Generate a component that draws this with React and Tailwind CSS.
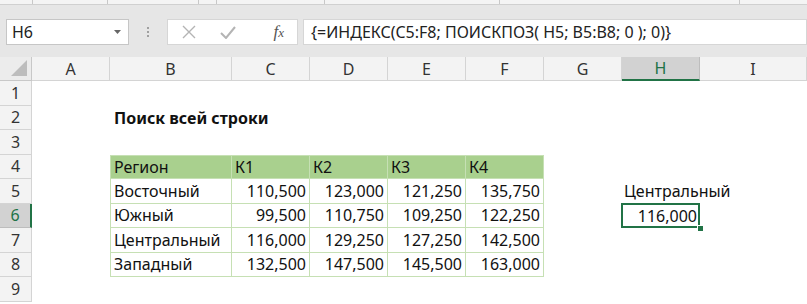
const cols = ["A", "B", "C", "D", "E", "F", "G", "H", "I"];

const data = [
  ["Восточный", "110,500", "123,000", "121,250", "135,750"],
  ["Южный", "99,500", "110,750", "109,250", "122,250"],
  ["Центральный", "116,000", "129,250", "127,250", "142,500"],
  ["Западный", "132,500", "147,500", "145,500", "163,000"],
];

function Cell({ row, col }) {
  // col: 0 = A ... 8 = I
  const inTable = row >= 4 && row <= 8 && col >= 1 && col <= 5;
  let cls = "relative flex items-center text-[16px] text-[#111] whitespace-nowrap";
  let content = null;

  if (inTable) {
    cls += " border-r border-b border-[#c6e0b4]";
    if (col === 1) cls += " border-l";
    if (row === 4) cls += " border-t bg-[#a9d08e] px-[3px]";
    if (row === 4) {
      content = ["Регион", "К1", "К2", "К3", "К4"][col - 1];
    } else {
      const v = data[row - 5][col - 1];
      content = v;
      cls += col === 1 ? " px-[3px]" : " justify-end px-[3px]";
    }
  }

  if (row === 2 && col === 1) {
    cls += " px-[4px] font-bold overflow-visible";
    content = "Поиск всей строки";
  }
  if (row === 5 && col === 7) {
    cls += " px-[2px] overflow-visible z-10";
    content = "Центральный";
  }
  if (row === 6 && col === 7) {
    cls += " justify-end px-[3px]";
    content = "116,000";
  }

  return (
    <div className={cls}>
      {content}
      {row === 6 && col === 7 && (
        <>
          <div className="absolute -left-[1px] -top-[1px] right-0 bottom-0 border-2 border-[#217346]" />
          <div className="absolute -right-[4px] -bottom-[4px] w-[7px] h-[7px] bg-[#217346] border border-white" />
        </>
      )}
    </div>
  );
}

export default function App() {
  return (
    <div
      className="w-[807px] h-[304px] overflow-hidden bg-white"
      style={{ fontFamily: "'Noto Sans', 'Open Sans', sans-serif" }}
    >
      {/* ribbon remnant */}
      <div className="h-[5px] bg-[#f4f4f4] border-b border-[#d0d0d0] flex">
        <div className="w-[33px] border-r border-[#c8c8c8]" />
        <div className="w-[75px] border-r border-[#c8c8c8]" />
        <div className="w-[91px] border-r border-[#c8c8c8]" />
        <div className="w-[18px] border-r border-[#c8c8c8]" />
        <div className="w-[108px] border-r border-[#c8c8c8]" />
        <div className="w-[175px] border-r border-[#c8c8c8]" />
        <div className="w-[240px] border-r border-[#c8c8c8]" />
      </div>

      {/* formula bar */}
      <div className="h-[52px] bg-[#e6e6e6] flex items-start pt-[14px]">
        <div className="ml-[6px] w-[123px] h-[26px] bg-white border border-[#c6c6c6] flex items-center pl-[5px] pr-[7px] text-[16px] text-[#222]">
          <span className="flex-1">H6</span>
          <svg width="7" height="4" viewBox="0 0 7 4">
            <path d="M0 0h7L3.5 4z" fill="#666" />
          </svg>
        </div>
        <div className="w-[38px] h-[26px] flex flex-col items-center justify-center gap-[2px]">
          <span className="w-[2px] h-[2px] bg-[#a0a0a0]" />
          <span className="w-[2px] h-[2px] bg-[#a0a0a0]" />
          <span className="w-[2px] h-[2px] bg-[#a0a0a0]" />
        </div>
        <div className="w-[131px] h-[26px] bg-white border border-[#d6d6d6] flex items-center">
          <svg className="ml-[14px]" width="14" height="14" viewBox="0 0 14 14">
            <path d="M1 1L13 13M13 1L1 13" stroke="#b4b4b4" strokeWidth="1.4" />
          </svg>
          <svg className="ml-[24px]" width="16" height="13" viewBox="0 0 16 13">
            <path d="M1 7L6 12L15 1" stroke="#b4b4b4" strokeWidth="2" fill="none" />
          </svg>
          <span
            className="ml-auto mr-[13px] text-[17px] italic text-[#555]"
            style={{ fontFamily: "'Liberation Serif', serif" }}
          >
            f<span className="text-[13px]">x</span>
          </span>
        </div>
        <div className="ml-[5px] flex-1 h-[26px] bg-white border border-[#d6d6d6] flex items-center pl-[7px] text-[16px] text-[#222] whitespace-nowrap">
          {"{=ИНДЕКС(C5:F8; ПОИСКПОЗ( H5; B5:B8; 0 ); 0)}"}
        </div>
      </div>

      {/* sheet */}
      <div className="grid grid-cols-[32px_78px_122px_78px_78px_78px_78px_78px_78px_107px] grid-rows-[24px_repeat(9,24.5px)]">
        {/* corner */}
        <div className="bg-[#ececec] border-r border-b border-[#c8c8c8] relative">
          <svg className="absolute right-[4px] bottom-[4px]" width="16" height="16" viewBox="0 0 16 16">
            <path d="M16 0V16H0z" fill="#bdbdbd" />
          </svg>
        </div>
        {cols.map((c) => (
          <div
            key={c}
            className={
              "flex items-center justify-center text-[16px] border-r " +
              (c === "H"
                ? "bg-[#d2d2d2] text-[#217346] border-b-2 border-b-[#217346] border-r-[#bdbdbd]"
                : "bg-[#f3f3f3] text-[#333] border-b border-[#d4d4d4]")
            }
          >
            {c}
          </div>
        ))}

        {Array.from({ length: 9 }, (_, i) => i + 1).map((r) => (
          <div key={r} className="contents">
            <div
              className={
                "flex items-center justify-center text-[16px] border-b " +
                (r === 6
                  ? "bg-[#d2d2d2] text-[#217346] border-r-2 border-r-[#217346] border-b-[#bdbdbd]"
                  : "bg-[#f3f3f3] text-[#333] border-r border-[#d4d4d4]")
              }
            >
              {r}
            </div>
            {cols.map((c, ci) => (
              <Cell key={c} row={r} col={ci} />
            ))}
          </div>
        ))}
      </div>
    </div>
  );
}
